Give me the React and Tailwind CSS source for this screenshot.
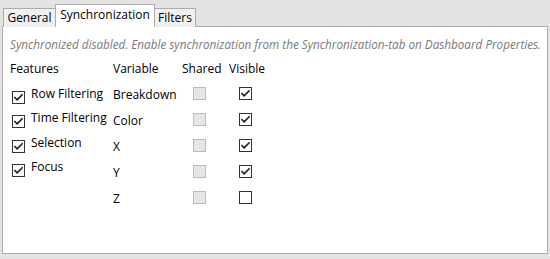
import { Check } from "lucide-react";

const features = [
  { label: "Row Filtering", on: true, h: "h-[24px]" },
  { label: "Time Filtering", on: true, h: "h-[25px]" },
  { label: "Selection", on: true, h: "h-[24px]" },
  { label: "Focus", on: true, h: "h-[25px]" },
];

const variables = [
  { name: "Breakdown", visible: true },
  { name: "Color", visible: true },
  { name: "X", visible: true },
  { name: "Y", visible: true },
  { name: "Z", visible: false },
];

const Box = ({ checked, disabled }) => (
  <div
    className={`flex h-[13px] w-[13px] shrink-0 items-center justify-center border ${
      disabled ? "border-[#bcbcbc] bg-[#e6e6e6]" : "border-[#333] bg-white"
    }`}
  >
    {checked && <Check size={11} strokeWidth={3.6} className="text-[#212121]" />}
  </div>
);

const App = () => {
  return (
    <div
      className="flex h-[259px] w-[550px] flex-col bg-[#e3e3e3] px-[2px] pt-[4px] text-[12px] text-black"
      style={{ fontFamily: '"Open Sans", sans-serif' }}
    >
      {/* Tabs */}
      <div className="relative z-10 -mb-px flex items-end pl-px">
        <div className="flex h-[19px] w-[53px] items-center justify-center border border-b-0 border-[#acacac] bg-[#f0f0f0]">
          General
        </div>
        <div className="-ml-px flex h-[23px] w-[100px] items-center justify-center border border-b-0 border-[#acacac] bg-white pb-[2px]">
          Synchronization
        </div>
        <div className="-ml-px flex h-[19px] w-[42px] items-center justify-center border border-b-0 border-[#acacac] bg-[#f0f0f0]">
          Filters
        </div>
      </div>

      {/* Panel */}
      <div className="h-[228px] w-[546px] border border-[#acacac] bg-white px-[7px] pt-[9px]">
        <p className="whitespace-nowrap text-[11.7px] italic leading-[16px] text-[#7a7a7a]">
          Synchronized disabled. Enable synchronization from the Synchronization-tab on Dashboard Properties.
        </p>

        <div className="mt-[9px] flex">
          {/* Features */}
          <div className="w-[103px]">
            <div className="h-[16px] leading-[16px]">Features</div>
            <div className="mt-[9px] flex flex-col pl-[2px]">
              {features.map((f) => (
                <div key={f.label} className={`flex items-start gap-[6px] ${f.h}`}>
                  <div className="pt-[5px]">
                    <Box checked={f.on} />
                  </div>
                  <span className="leading-[16px]">{f.label}</span>
                </div>
              ))}
            </div>
          </div>

          {/* Variables */}
          <div className="flex flex-col">
            <div className="flex h-[16px] leading-[16px]">
              <div className="w-[69px]">Variable</div>
              <div className="w-[47px]">Shared</div>
              <div>Visible</div>
            </div>
            <div className="mt-[10px] flex flex-col">
              {variables.map((v) => (
                <div key={v.name} className="flex h-[26px] items-start">
                  <div className="w-[69px] leading-[16px]">{v.name}</div>
                  <div className="w-[47px] pl-[11px]">
                    <Box disabled />
                  </div>
                  <div className="pl-[10px]">
                    <Box checked={v.visible} />
                  </div>
                </div>
              ))}
            </div>
          </div>
        </div>
      </div>
    </div>
  );
};

export default App;
